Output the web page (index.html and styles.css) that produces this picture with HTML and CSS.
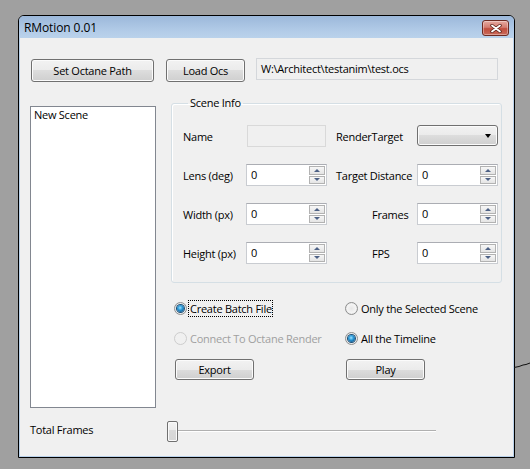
FILE: index.html
```html
<!DOCTYPE html>
<html lang="en">

<head>
  <meta charset="UTF-8">
  <meta name="viewport" content="width=device-width, initial-scale=1.0">
  <title>RMotion 0.01</title>
  <link rel="stylesheet" href="styles.css">
</head>

<body>
  <!-- Fenêtre principale -->
  <div class="window">
    <div class="titlebar">
      <span class="title">RMotion 0.01</span>
      <button class="close-btn" title="Close">
        <svg width="12" height="9" viewBox="0 0 12 9">
          <path d="M2 1.5 L10 7.5 M10 1.5 L2 7.5" stroke="#5a1f17" stroke-width="3.4" stroke-linecap="round" />
          <path d="M2 1.5 L10 7.5 M10 1.5 L2 7.5" stroke="#ffffff" stroke-width="1.8" stroke-linecap="round" />
        </svg>
      </button>
    </div>

    <div class="client">
      <div class="top-row">
        <button class="btn btn-path">Set Octane Path</button>
        <button class="btn btn-load">Load Ocs</button>
        <div class="path-box">W:\Architect\testanim\test.ocs</div>
      </div>

      <div class="main">
        <div class="scene-list">
          <div class="scene-item">New Scene</div>
        </div>

        <div class="right-col">
          <fieldset class="scene-info">
            <legend>Scene Info</legend>
            <div class="info-grid">
              <span class="lbl">Name</span>
              <div class="textbox disabled"></div>
              <span class="lbl lbl-r">RenderTarget</span>
              <div class="combo"><span class="combo-arrow"></span></div>

              <span class="lbl">Lens (deg)</span>
              <div class="spin"><span class="spin-val">0</span><span class="spin-btns"><span class="spin-up"></span><span class="spin-down"></span></span></div>
              <span class="lbl lbl-r">Target Distance</span>
              <div class="spin"><span class="spin-val">0</span><span class="spin-btns"><span class="spin-up"></span><span class="spin-down"></span></span></div>

              <span class="lbl">Width (px)</span>
              <div class="spin"><span class="spin-val">0</span><span class="spin-btns"><span class="spin-up"></span><span class="spin-down"></span></span></div>
              <span class="lbl lbl-r lbl-far">Frames</span>
              <div class="spin"><span class="spin-val">0</span><span class="spin-btns"><span class="spin-up"></span><span class="spin-down"></span></span></div>

              <span class="lbl">Height (px)</span>
              <div class="spin"><span class="spin-val">0</span><span class="spin-btns"><span class="spin-up"></span><span class="spin-down"></span></span></div>
              <span class="lbl lbl-r lbl-far">FPS</span>
              <div class="spin"><span class="spin-val">0</span><span class="spin-btns"><span class="spin-up"></span><span class="spin-down"></span></span></div>
            </div>
          </fieldset>

          <div class="options">
            <div class="radio-item"><span class="radio checked"></span><span class="radio-text focus">Create Batch File</span></div>
            <div class="radio-item"><span class="radio"></span><span class="radio-text">Only the Selected Scene</span></div>
            <div class="radio-item disabled"><span class="radio"></span><span class="radio-text">Connect To Octane Render</span></div>
            <div class="radio-item"><span class="radio checked"></span><span class="radio-text">All the Timeline</span></div>
          </div>

          <div class="actions">
            <button class="btn btn-small">Export</button>
            <button class="btn btn-small">Play</button>
          </div>
        </div>
      </div>

      <div class="bottom-row">
        <span class="total-label">Total Frames</span>
        <div class="slider">
          <div class="slider-thumb"></div>
          <div class="slider-track"></div>
        </div>
      </div>
    </div>
  </div>

  <!-- trait sur le bureau -->
  <svg class="stray-line" width="16" height="10" viewBox="0 0 16 10">
    <path d="M0 8.5 L5 7.5 L9 6 L12 5.5 L16 4" stroke="#111" stroke-width="1" fill="none" />
  </svg>
</body>

</html>
```

FILE: styles.css
```css
/* Styles généraux */
body {
  font-family: 'Open Sans', 'Noto Sans', sans-serif;
  font-size: 11px;
  letter-spacing: -0.25px;
  color: #000;
  margin: 0;
  padding: 0;
  background-color: #a0a0a0;
  position: relative;
  height: 469px;
  overflow: hidden;
}

/* Fenêtre */
.window {
  margin: 15px 0 0 18px;
  width: 497px;
  height: 443px;
  box-sizing: border-box;
  border: 1px solid #000;
  border-radius: 6px 6px 0 0;
  background-color: #b9d1ea;
  display: flex;
  flex-direction: column;
  padding: 0 1px 1px 1px;
}

.titlebar {
  height: 22px;
  display: flex;
  align-items: center;
  justify-content: space-between;
  padding-left: 5px;
  border-radius: 5px 5px 0 0;
  background: linear-gradient(#9cb8da, #b3cce8 70%, #bad2eb);
  margin: 0 -1px;
}

.title {
  font-size: 12px;
  letter-spacing: -0.1px;
  color: #000;
}

.close-btn {
  align-self: flex-start;
  margin: 4px 5px 0 0;
  width: 27px;
  height: 16px;
  padding: 0;
  border: 1px solid #6d2a22;
  border-radius: 3px;
  background: linear-gradient(#e6aaa1 0%, #d47c70 45%, #c04d3d 55%, #c96a5a 100%);
  box-shadow: inset 0 0 0 1px rgba(255, 255, 255, 0.35);
  display: flex;
  justify-content: center;
  align-items: center;
}

.client {
  flex: 1;
  background-color: #f0f0f0;
  padding: 20px 0 0 10px;
}

/* Boutons */
.btn {
  font-family: 'Open Sans', 'Noto Sans', sans-serif;
  font-size: 11px;
  letter-spacing: -0.25px;
  color: #000;
  padding: 0;
  border: 1px solid #707070;
  border-radius: 3px;
  background: linear-gradient(#f2f2f2 0%, #ebebeb 50%, #dddddd 50%, #cfcfcf 100%);
  box-shadow: inset 0 0 0 1px #fbfbfb;
}

.top-row {
  display: flex;
  align-items: flex-start;
  margin-left: 1px;
}

.btn-path {
  width: 123px;
  height: 23px;
  margin-top: 1px;
}

.btn-load {
  width: 79px;
  height: 23px;
  margin: 1px 0 0 12px;
}

.path-box {
  width: 242px;
  height: 22px;
  box-sizing: border-box;
  margin-left: 11px;
  padding-left: 4px;
  border: 1px solid #d4d7db;
  background-color: #f0f0f0;
  line-height: 19px;
}

/* Zone principale */
.main {
  display: flex;
  align-items: flex-start;
  margin-top: 13px;
}

.scene-list {
  width: 126px;
  height: 302px;
  box-sizing: border-box;
  margin-top: 11px;
  border: 1px solid #828790;
  background-color: #fff;
}

.scene-item {
  padding: 0 3px;
  line-height: 15px;
}

.right-col {
  margin-left: 15px;
  width: 331px;
}

.scene-info {
  margin: 0;
  padding: 14px 3px 18px 11px;
  border: 1px solid #d5dfe5;
  border-radius: 3px;
  box-shadow: inset 1px 1px 0 #fff;
}

.scene-info legend {
  margin-left: 5px;
  padding: 0 2px;
  line-height: 16px;
}

.info-grid {
  display: grid;
  grid-template-columns: 63px 81px 90px 81px;
  grid-auto-rows: 22px;
  row-gap: 17px;
}

.lbl {
  align-self: center;
  white-space: nowrap;
}

.lbl-r {
  padding-left: 9px;
}

.lbl-far {
  padding-left: 45px;
}

.textbox {
  border: 1px solid #c9ccd1;
  background-color: #fff;
  margin: 0 1px;
}

.textbox.disabled {
  background-color: #f0f0f0;
  border-color: #d9d9d9;
}

.combo {
  height: 21px;
  box-sizing: border-box;
  border: 1px solid #707070;
  border-radius: 3px;
  background: linear-gradient(#f2f2f2 0%, #ebebeb 50%, #dddddd 50%, #cfcfcf 100%);
  box-shadow: inset 0 0 0 1px #fbfbfb;
  display: flex;
  align-items: center;
  justify-content: flex-end;
  padding-right: 6px;
}

.combo-arrow {
  width: 0;
  height: 0;
  border-left: 3.5px solid transparent;
  border-right: 3.5px solid transparent;
  border-top: 4px solid #000;
  margin-top: 1px;
}

/* Champs numériques */
.spin {
  display: flex;
  box-sizing: border-box;
  border: 1px solid #c9ccd1;
  border-top-color: #abadb3;
  background-color: #fff;
}

.spin-val {
  flex: 1;
  padding-left: 4px;
  line-height: 20px;
}

.spin-btns {
  display: flex;
  flex-direction: column;
  gap: 1px;
  padding: 1px 1px 1px 0;
}

.spin-up,
.spin-down {
  width: 16px;
  flex: 1;
  box-sizing: border-box;
  border: 1px solid #b2b2b2;
  background: linear-gradient(#f7f7f7, #e4e4e4);
  display: flex;
  justify-content: center;
  align-items: center;
}

.spin-up::after,
.spin-down::after {
  content: '';
  width: 0;
  height: 0;
  border-left: 3.5px solid transparent;
  border-right: 3.5px solid transparent;
}

.spin-up::after {
  border-bottom: 3px solid #4d6185;
}

.spin-down::after {
  border-top: 3px solid #4d6185;
}

/* Boutons radio */
.options {
  display: grid;
  grid-template-columns: 171px 171px;
  grid-auto-rows: 16px;
  row-gap: 14px;
  margin: 17px 0 0 3px;
}

.radio-item {
  display: flex;
  align-items: center;
  white-space: nowrap;
}

.radio {
  width: 13px;
  height: 13px;
  box-sizing: border-box;
  border-radius: 50%;
  border: 1px solid #8e8f8f;
  background: radial-gradient(circle at 50% 50%, #e6e6e6 0%, #f4f4f4 55%, #d0d0d0 100%);
  margin-right: 3px;
  display: flex;
  justify-content: center;
  align-items: center;
}

.radio.checked::after {
  content: '';
  width: 7px;
  height: 7px;
  border-radius: 50%;
  background: radial-gradient(circle at 45% 40%, #9fe2ff 0%, #2b9ad8 40%, #0c4f86 85%);
  box-shadow: 0 0 0 1px #1b4e75;
}

.radio-text.focus {
  outline: 1px dotted #000;
  outline-offset: 0;
  margin-left: -1px;
  padding-left: 1px;
}

.radio-item.disabled .radio {
  border-color: #cdcdcd;
  background: #f0f0f0;
}

.radio-item.disabled .radio-text {
  color: #a0a0a0;
}

.actions {
  display: grid;
  grid-template-columns: 171px 171px;
  margin: 13px 0 0 4px;
}

.btn-small {
  width: 79px;
  height: 21px;
}

/* Barre du bas */
.bottom-row {
  display: flex;
  align-items: center;
  margin-top: 13px;
}

.total-label {
  width: 137px;
  margin-top: -5px;
}

.slider {
  display: flex;
  align-items: center;
}

.slider-thumb {
  width: 11px;
  height: 21px;
  box-sizing: border-box;
  border: 1px solid #707070;
  border-radius: 2px;
  background: linear-gradient(#f4f4f4 0%, #ececec 40%, #d9d9d9 45%, #d6d6d6 100%);
  box-shadow: inset 0 0 0 1px #fafafa;
}

.slider-track {
  width: 258px;
  height: 1px;
  margin-top: -2px;
  background-color: #b0b0b0;
  border-bottom: 1px solid #fff;
}

/* Trait sur le bureau */
.stray-line {
  position: absolute;
  left: 514px;
  top: 359px;
}
```
